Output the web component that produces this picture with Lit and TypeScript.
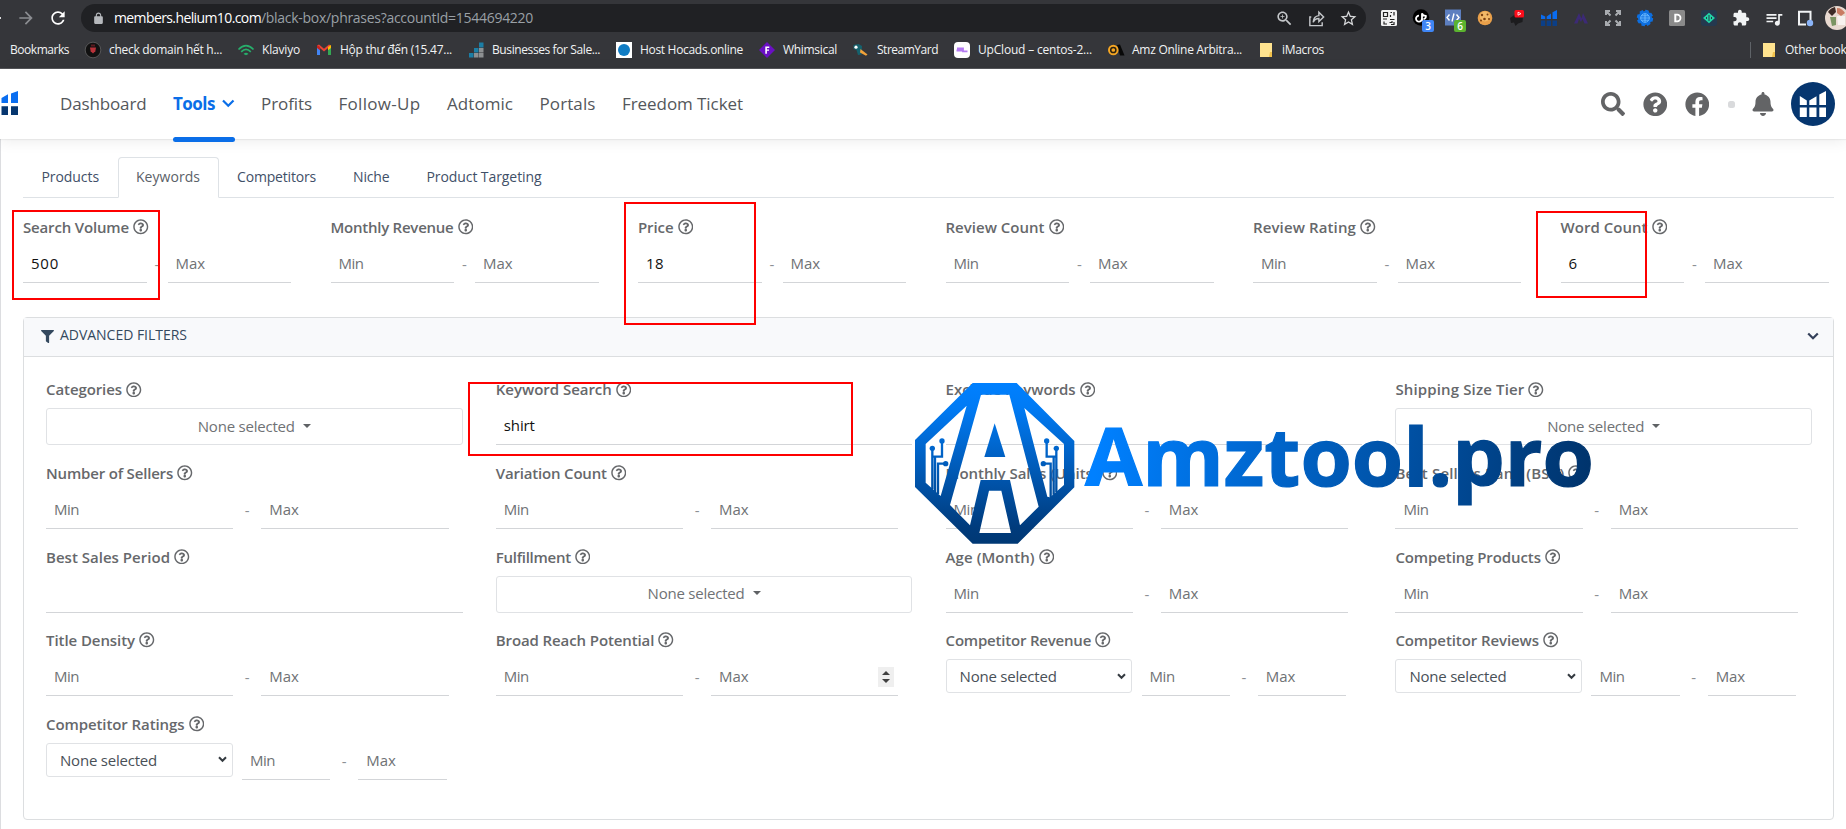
import { LitElement, html, css, svg, nothing } from "lit";
import { customElement, property } from "lit/decorators.js";

const P = {
  search:
    "M505 442.7L405.3 343c-4.5-4.5-10.6-7-17-7H372c27.6-35.3 44-79.7 44-128C416 93.1 322.9 0 208 0S0 93.1 0 208s93.1 208 208 208c48.3 0 92.7-16.4 128-44v16.3c0 6.4 2.5 12.5 7 17l99.7 99.7c9.4 9.4 24.6 9.4 33.9 0l28.3-28.3c9.4-9.4 9.4-24.6.1-34zM208 336c-70.7 0-128-57.2-128-128 0-70.7 57.2-128 128-128 70.7 0 128 57.2 128 128 0 70.7-57.2 128-128 128z",
  help: "M504 256c0 136.997-111.043 248-248 248S8 392.997 8 256C8 119.083 119.043 8 256 8s248 111.083 248 248zM262.655 90c-54.497 0-89.255 22.957-116.549 63.758-3.536 5.286-2.353 12.415 2.715 16.258l34.699 26.31c5.205 3.947 12.621 3.008 16.665-2.122 17.864-22.658 30.113-35.797 57.303-35.797 20.429 0 45.698 13.148 45.698 32.958 0 14.976-12.363 22.667-32.534 33.976C247.128 238.528 216 254.941 216 296v4c0 6.627 5.373 12 12 12h56c6.627 0 12-5.373 12-12v-1.333c0-28.462 83.186-29.647 83.186-106.667 0-58.002-60.165-102-116.531-102zM256 338c-25.365 0-46 20.635-46 46 0 25.364 20.635 46 46 46s46-20.636 46-46c0-25.365-20.635-46-46-46z",
  helpLine:
    "M256 8C119.043 8 8 119.083 8 256c0 136.997 111.043 248 248 248s248-111.003 248-248C504 119.083 392.957 8 256 8zm0 448c-110.532 0-200-89.431-200-200 0-110.495 89.472-200 200-200 110.491 0 200 89.471 200 200 0 110.53-89.431 200-200 200zm107.244-255.2c0 67.052-72.421 68.084-72.421 92.863V300c0 6.627-5.373 12-12 12h-45.647c-6.627 0-12-5.373-12-12v-8.659c0-35.745 27.1-50.034 47.579-61.516 17.561-9.845 28.324-16.541 28.324-29.579 0-17.246-21.999-28.693-39.784-28.693-23.189 0-33.894 10.977-48.942 29.969-4.057 5.12-11.46 6.071-16.666 2.124l-27.824-21.098c-5.107-3.872-6.251-11.066-2.644-16.363C184.846 131.491 214.94 112 261.794 112c49.071 0 101.45 38.304 101.45 88.8zM298 368c0 23.159-18.841 42-42 42s-42-18.841-42-42 18.841-42 42-42 42 18.841 42 42z",
  facebook:
    "M504 256C504 119 393 8 256 8S8 119 8 256c0 123.78 90.69 226.38 209.25 245V327.69h-63V256h63v-54.64c0-62.15 37-96.48 93.67-96.48 27.14 0 55.52 4.84 55.52 4.84v61h-31.28c-30.8 0-40.41 19.12-40.41 38.73V256h68.78l-11 71.69h-57.78V501C413.31 482.38 504 379.78 504 256z",
  bell: "M224 512c35.32 0 63.97-28.65 63.97-64H160.03c0 35.35 28.65 64 63.97 64zm215.39-149.71c-19.32-20.76-55.47-51.99-55.47-154.29 0-77.7-54.48-139.9-127.94-155.16V32c0-17.67-14.32-32-31.98-32s-31.98 14.33-31.98 32v20.84C118.56 68.1 64.08 130.3 64.08 208c0 102.3-36.15 133.53-55.47 154.29-6 6.45-8.66 14.16-8.61 21.71.11 16.4 12.98 32 32.1 32h383.8c19.12 0 32-15.6 32.1-32 .05-7.55-2.61-15.27-8.61-21.71z",
  filter:
    "M487.976 0H24.028C2.71 0-8.047 25.866 7.058 40.971L192 225.941V432c0 7.831 3.821 15.17 10.237 19.662l80 55.98C298.02 518.69 320 507.493 320 487.98V225.941l184.947-184.97C520.021 25.896 509.338 0 487.976 0z",
  puzzle:
    "M20.5 11H19V7c0-1.1-.9-2-2-2h-4V3.5C13 2.12 11.88 1 10.5 1S8 2.12 8 3.5V5H4c-1.1 0-1.99.9-1.99 2v3.8H3.5c1.49 0 2.7 1.21 2.7 2.7s-1.21 2.7-2.7 2.7H2V20c0 1.1.9 2 2 2h3.8v-1.5c0-1.49 1.21-2.7 2.7-2.7 1.49 0 2.7 1.21 2.7 2.7V22H17c1.1 0 2-.9 2-2v-4h1.5c1.38 0 2.5-1.12 2.5-2.5S21.88 11 20.5 11z",
  queue:
    "M15 6H3v2h12V6zm0 4H3v2h12v-2zM3 16h8v-2H3v2zM17 6v8.18c-.31-.11-.65-.18-1-.18-1.66 0-3 1.34-3 3s1.34 3 3 3 3-1.34 3-3V8h3V6h-5z",
  lock: "M18 8h-1V6c0-2.76-2.24-5-5-5S7 3.24 7 6v2H6c-1.1 0-2 .9-2 2v10c0 1.1.9 2 2 2h12c1.1 0 2-.9 2-2V10c0-1.1-.9-2-2-2zM9 6c0-1.66 1.34-3 3-3s3 1.34 3 3v2H9V6z",
  refresh:
    "M17.65 6.35C16.2 4.9 14.21 4 12 4c-4.42 0-7.99 3.58-7.99 8s3.57 8 7.99 8c3.73 0 6.84-2.55 7.73-6h-2.08c-.82 2.33-3.04 4-5.65 4-3.31 0-6-2.69-6-6s2.69-6 6-6c1.66 0 3.14.69 4.22 1.78L13 11h7V4l-2.35 2.35z",
  star: "M22 9.24l-7.19-.62L12 2 9.19 8.63 2 9.24l5.46 4.73L5.82 21 12 17.27 18.18 21l-1.63-7.03L22 9.24zM12 15.4l-3.76 2.27 1-4.28-3.32-2.88 4.38-.38L12 6.1l1.71 4.04 4.38.38-3.32 2.88 1 4.28L12 15.4z",
  zoom: "M15.5 14h-.79l-.28-.27C15.41 12.59 16 11.11 16 9.5 16 5.91 13.09 3 9.5 3S3 5.91 3 9.5 5.91 16 9.5 16c1.61 0 3.09-.59 4.23-1.57l.27.28v.79l5 4.99L20.49 19l-4.99-5zm-6 0C7.01 14 5 11.99 5 9.5S7.01 5 9.5 5 14 7.01 14 9.5 11.99 14 9.5 14zm2.5-4h-2v2H9v-2H7V9h2V7h1v2h2v1z",
  forward: "M12 4l-1.41 1.41L16.17 11H4v2h12.17l-5.58 5.59L12 20l8-8z",
};

const mat = (d: string, size: number, fill: string) =>
  html`<svg width=${size} height=${size} viewBox="0 0 24 24" fill=${fill}><path d=${d} /></svg>`;
const fa = (d: string, w: number, h: number, vw = 512) =>
  html`<svg width=${w} height=${h} viewBox="0 0 ${vw} 512" fill="currentColor"><path d=${d} /></svg>`;

/** A run of text tracked to an exact width. */
@customElement("fit-text")
class FitText extends LitElement {
  @property() text = "";
  @property({ type: Number }) w = 0;
  static styles = css`
    :host {
      display: inline-block;
      flex: none;
      white-space: pre;
      font-variant-ligatures: none;
    }
  `;
  render() {
    return html`<span>${this.text}</span>`;
  }
  firstUpdated() {
    const span = this.renderRoot.querySelector("span") as HTMLElement;
    const natural = span.getBoundingClientRect().width;
    if (this.w && natural) {
      span.style.letterSpacing = (this.w - natural) / this.text.length + "px";
      this.style.width = this.w + "px";
    }
  }
}
const t = (text: string, w: number) => html`<fit-text .text=${text} .w=${w}></fit-text>`;

type Kind = "range" | "button" | "text" | "select" | "spin";
interface Field {
  label: string;
  w: number;
  kind: Kind;
  value?: string;
  vw?: number;
}

@customElement("filter-field")
class FilterField extends LitElement {
  @property({ attribute: false }) field!: Field;
  static styles = css`
    :host {
      display: flex;
      flex-direction: column;
      gap: 8px;
      font-size: 15px;
      color: #6f7275;
    }
    .label {
      box-sizing: border-box;
      display: flex;
      align-items: center;
      gap: 4px;
      height: 20px;
      padding-bottom: 2px;
      line-height: 18px;
      font-weight: 600;
      color: #66686b;
    }
    .row {
      display: flex;
      align-items: flex-start;
      width: 100%;
    }
    .line {
      box-sizing: border-box;
      height: 37px;
      line-height: 35px;
      padding-left: 8px;
      border-bottom: 1px solid #d3d5d8;
      flex: 1;
      display: flex;
      justify-content: space-between;
    }
    .filled {
      color: #111;
    }
    .dash {
      width: var(--dash, 28px);
      text-align: center;
      line-height: 36px;
      color: #8d9094;
    }
    .btn {
      box-sizing: border-box;
      display: flex;
      align-items: center;
      justify-content: center;
      gap: 8px;
      height: 37px;
      padding-bottom: 2px;
      border: 1px solid #e0e2e5;
      border-radius: 3px;
      width: 416.5px;
    }
    .caret {
      border: 4.5px solid transparent;
      border-top-color: #5f6265;
      border-bottom: 0;
    }
    .sel {
      box-sizing: border-box;
      display: flex;
      align-items: center;
      justify-content: space-between;
      width: 186.5px;
      height: 34px;
      padding: 0 5px 0 13px;
      border: 1px solid #e0e2e5;
      border-radius: 3px;
      margin-right: 9.5px;
      color: #495057;
    }
    .range {
      width: var(--range, 402.5px);
    }
    .text {
      width: 416.5px;
    }
    .mini {
      width: 204.5px;
    }
    .spin {
      align-self: center;
      margin-right: 4px;
    }
  `;
  pair(f: Field) {
    const spin = html`<svg class="spin" width="16" height="20" viewBox="0 0 16 20">
      <rect width="16" height="20" fill="#efefef" />
      <path d="M8 4l4 4H4zM8 16l4-4H4z" fill="#404040" />
    </svg>`;
    return html`<div class="line ${f.value ? "filled" : ""}">
        ${f.value ? t(f.value, f.vw ?? 0) : t("Min", 25)}
      </div>
      <div class="dash">-</div>
      <div class="line">${t("Max", 29.5)}${f.kind === "spin" ? spin : nothing}</div>`;
  }
  control(f: Field) {
    switch (f.kind) {
      case "button":
        return html`<div class="btn">${t("None selected", 97)}<i class="caret"></i></div>`;
      case "text":
        return html`<div class="row text">
          <div class="line filled">${f.value ? t(f.value, f.vw ?? 0) : nothing}</div>
        </div>`;
      case "select":
        return html`<div class="row">
          <div class="sel">
            ${t("None selected", 97)}<svg width="9" height="7" viewBox="0 0 9 7">
              <path d="M1 1.2l3.5 3.6L8 1.2" fill="none" stroke="#343a40" stroke-width="2" />
            </svg>
          </div>
          <div class="row mini">${this.pair(f)}</div>
        </div>`;
      default:
        return html`<div class="row range">${this.pair(f)}</div>`;
    }
  }
  render() {
    const f = this.field;
    return html`<div class="label">${t(f.label, f.w)}${fa(P.helpLine, 15.5, 15.5)}</div>
      ${this.control(f)}`;
  }
}

const topFields: Field[] = [
  { label: "Search Volume", w: 106, kind: "range", value: "500", vw: 28 },
  { label: "Monthly Revenue", w: 123, kind: "range" },
  { label: "Price", w: 35.5, kind: "range", value: "18", vw: 18 },
  { label: "Review Count", w: 99, kind: "range" },
  { label: "Review Rating", w: 103, kind: "range" },
  { label: "Word Count", w: 87, kind: "range", value: "6", vw: 9 },
];
const advanced: Field[] = [
  { label: "Categories", w: 76, kind: "button" },
  { label: "Keyword Search", w: 116, kind: "text", value: "shirt", vw: 31 },
  { label: "Exclude Keywords", w: 130, kind: "text" },
  { label: "Shipping Size Tier", w: 129, kind: "button" },
  { label: "Number of Sellers", w: 127, kind: "range" },
  { label: "Variation Count", w: 111, kind: "range" },
  { label: "Monthly Sales (Units)", w: 152, kind: "range" },
  { label: "Best Sellers Rank (BSR)", w: 169, kind: "range" },
  { label: "Best Sales Period", w: 124, kind: "text" },
  { label: "Fulfillment", w: 75, kind: "button" },
  { label: "Age (Month)", w: 89, kind: "range" },
  { label: "Competing Products", w: 145.5, kind: "range" },
  { label: "Title Density", w: 89, kind: "range" },
  { label: "Broad Reach Potential", w: 158.5, kind: "spin" },
  { label: "Competitor Revenue", w: 145.5, kind: "select" },
  { label: "Competitor Reviews", w: 143.5, kind: "select" },
  { label: "Competitor Ratings", w: 138.5, kind: "select" },
];

const ico = (body: unknown) =>
  html`<svg width="18" height="18" viewBox="0 0 18 18">${body}</svg>`;

const bars = (a: string, b: string) => svg`
  <path d="M1 5.5l4.2 2V10H1zM6.7 7.5l4.3-3V10H6.7zM12.5 3.2L17 1v9h-4.5z" fill=${a} />
  <path d="M1 11.5h4.2V17H1zM6.7 11.5H11V17H6.7zM12.5 11.5H17V17h-4.5z" fill=${b} />`;

const bookmarks: { text: string; w: number; icon: unknown }[] = [
  {
    text: "check domain hết h...", w: 113,
    icon: svg`<circle cx="9" cy="9" r="7.8" fill="#111" stroke="#777" stroke-width=".6"/><path d="M6 6.500h6l-.7 3.700L9 12.500l-2.300-2.300z" fill="#b8323a"/><path d="M7 3.500h4v2H7z" fill="#5b1b20"/>`,
  },
  {
    text: "Klaviyo", w: 38,
    icon: svg`<g fill="none" stroke="#27ae6b" stroke-width="1.7"><path d="M1.500 8.500Q9 1 16.500 8.500"/><path d="M4.200 10.800Q9 6 13.800 10.800"/></g><path d="M6.500 13Q9 10.500 11.500 13L9 14.200z" fill="#27ae6b"/>`,
  },
  {
    text: "Hộp thư đến (15.47...", w: 112,
    icon: svg`<path d="M2 4.500v9.500h3V8z" fill="#4285f4"/><path d="M16 4.500v9.500h-3V8z" fill="#34a853"/><path d="M2 4.500L4 3.500l5 4.200 5-4.200 2 1-7 6z" fill="#ea4335"/><path d="M2 4v3l3 2.300V6z" fill="#c5221f"/><path d="M16 4v3l-3 2.300V6z" fill="#fbbc04"/>`,
  },
  {
    text: "Businesses for Sale...", w: 108,
    icon: svg`<g fill="#1b7ea6"><path d="M12 1.500h4.500v5H12zM7 7h4.500v4.500H7zM2 12h4.500v4.500H2z"/></g><g fill="#8d9092"><path d="M12 7h4.500v4.500H12zM7 12h4.500v4.500H7zM12 12h4.500v4.500H12z"/></g>`,
  },
  {
    text: "Host Hocads.online", w: 103,
    icon: svg`<path d="M1 1h16v16H1z" fill="#fff"/><circle cx="9" cy="9" r="6" fill="#0f7cc4"/>`,
  },
  {
    text: "Whimsical", w: 54,
    icon: svg`<path d="M9 1l8 8-8 8-8-8z" fill="#6a0fc4"/><path d="M7.300 5.500h4v1.400H8.900v1.500H11v1.300H8.900v3H7.300z" fill="#fff"/>`,
  },
  {
    text: "StreamYard", w: 61,
    icon: svg`<path d="M1.500 4l5-1 3.500 2-.5 8.500L6 14l-1.500-5-3-1z" fill="#15616d"/><circle cx="4" cy="6.200" r="1.600" fill="#fff"/><path d="M8.500 8l7 5.500-1.500 1.200-6-3.200z" fill="#f2a33a"/>`,
  },
  {
    text: "UpCloud – centos-2...", w: 114,
    icon: svg`<rect x="1" y="1" width="16" height="16" rx="4" fill="#fff"/><path d="M4 7.500h6v2.800h4.500M3.500 9.500h6.500" fill="none" stroke="#b57bf2" stroke-width="1.800"/>`,
  },
  {
    text: "Amz Online Arbitra...", w: 110,
    icon: svg`<path d="M10 4l3-.5 4.500 11H13z" fill="#080808"/><circle cx="6.300" cy="9" r="5.300" fill="#f5a623"/><circle cx="6.300" cy="9" r="2.600" fill="none" stroke="#2a2110" stroke-width="1.500"/>`,
  },
  {
    text: "iMacros", w: 42,
    icon: svg`<path d="M3 2h12v14H3z" fill="#ffe38f"/><path d="M13 11h2v5h-3z" fill="#f2c14b"/>`,
  },
];

const extensions: unknown[] = [
  svg`<rect x="1" y="1" width="16" height="16" rx="1.500" fill="#f2f2f2"/><g fill="none" stroke="#222" stroke-width="1.200"><path d="M3.500 3.500h4v4h-4zM10.500 3.500h1.500M14 3v3.500M10.500 6v2M3 10h4M10 10.500h4.500M4 12.500v2.500h3M9.500 13.500h2.500v-1.500M14 13v2.500h-3"/></g>`,
  svg`<circle cx="9" cy="8.500" r="8.300" fill="#000"/><g fill="none" stroke="#fff" stroke-width="1.800"><path d="M10 12V4.200M10 4.200c.4 1.700 1.800 2.600 3.800 2.600a2.500 2.500 0 0 1-2.300 3.200"/><path d="M10 9.500a3 3 0 1 1-3-2.800"/></g>`,
  svg`<path d="M1 .5h16v16H1z" fill="#5d7fc0"/><path d="M5.500 5.500L3 8.500l2.500 3M12.500 5.500l2.500 3-2.500 3M10 4.500l-2 8" fill="none" stroke="#fff" stroke-width="1.400"/>`,
  svg`<circle cx="9" cy="9" r="7.300" fill="#e9a04a"/><circle cx="9" cy="7.500" r="5" fill="#f3b968"/><g fill="#7b4012"><circle cx="6" cy="6" r="1.200"/><circle cx="11.500" cy="5.500" r="1"/><circle cx="8.500" cy="10" r="1.300"/><circle cx="13" cy="10" r="1"/><circle cx="5" cy="11.500" r="1"/></g>`,
  svg`<path d="M2 9l5-3.500 8 1.500-.5 6-4.500 1.500L7.500 17 6 13.500 3 14z" fill="#1c1c1e"/><rect x="6.500" y="1" width="9.500" height="7.500" rx="1.500" fill="#fb0d1b"/><path d="M10 3.200l3 1.500-3 1.500z" fill="none" stroke="#fff" stroke-width=".8"/>`,
  bars("#0a6cf0", "#0b3f87"),
  svg`<path d="M2 14.500L7 4l2.500 5.500L11 4l5 10.500h-3.500L10.500 10 9 13 7 10l-1.500 4.500z" fill="#3c2a75"/>`,
  svg`<g fill="none" stroke="#a9acb0" stroke-width="2"><path d="M6.500 6.500L2 2M2 6V2h4M11.500 6.500L16 2M12 2h4v4M6.500 11.500L2 16M2 12v4h4M11.500 11.500L16 16M12 16h4v-4"/></g>`,
  svg`<circle cx="9" cy="9" r="7" fill="#0d6fe0" /><circle cx="9" cy="9" r="7.200" fill="none" stroke="#0d6fe0" stroke-width="2" stroke-dasharray="3.600 2.050"/><g stroke="#6fbcff" stroke-width=".9" fill="none"><circle cx="9" cy="9" r="4.300"/><path d="M4.700 9h8.600M9 4.700v8.600M5.500 6.800h7M5.500 11.200h7"/></g>`,
  svg`<rect x="1" y="1" width="16" height="16" rx="1.500" fill="#8a8a8a"/><path d="M6.300 4.800h2.900a4.200 4.200 0 0 1 0 8.400H6.300zM8.300 6.500v5h.9a2.500 2.500 0 0 0 0-5z" fill="#fff" fill-rule="evenodd"/>`,
  svg`<rect x="1" y="1" width="16" height="16" rx="3" fill="#24394f"/><path d="M9 3.700l6 5.300-6 5.300L3 9z" fill="#22d3a5"/><path d="M9 6v6M6.500 8v2M11.500 8v2" stroke="#24394f" stroke-width="1"/>`,
];

@customElement("app-root")
class AppRoot extends LitElement {
  static styles = css`
    :host {
      display: block;
      position: relative;
      width: 1846px;
      height: 829px;
      overflow: hidden;
      background: #fff;
      font-family: "Open Sans", "Noto Sans", sans-serif;
    }
    svg {
      display: block;
      flex: none;
    }
    .chrome {
      box-sizing: border-box;
      height: 69px;
      background: #35363a;
      border-bottom: 1px solid #55565a;
      color: #f1f3f4;
    }
    .toolbar {
      display: flex;
      align-items: center;
      height: 28px;
      padding-top: 4px;
    }
    .tail {
      width: 1px;
      height: 2px;
      background: #ddd;
      margin-right: 15px;
    }
    .reload {
      margin: 0 13px 0 12px;
    }
    .url {
      display: flex;
      align-items: center;
      box-sizing: border-box;
      width: 1287px;
      height: 28px;
      padding: 0 8px 0 11px;
      border-radius: 14px;
      background: #202124;
      font-size: 14px;
      line-height: 28px;
      color: #fff;
    }
    .host {
      margin-left: 9px;
    }
    .path {
      color: #9aa0a6;
      flex: 1;
    }
    .acts {
      display: flex;
      gap: 13px;
    }
    .exts {
      display: flex;
      gap: 14px;
      margin-left: 14px;
    }
    .ext {
      position: relative;
      width: 18px;
      height: 18px;
    }
    .badge {
      position: absolute;
      left: 10px;
      top: 11px;
      width: 12px;
      height: 12px;
      border-radius: 2px;
      background: #3f86f5;
      color: #fff;
      font: 600 10px/12px "Open Sans", sans-serif;
      text-align: center;
    }
    .green {
      background: #5bb32f;
    }
    .face {
      width: 24px;
      height: 24px;
      margin: -3px;
    }
    .marks {
      display: flex;
      align-items: center;
      height: 36px;
      padding-left: 10px;
      font-size: 12px;
      line-height: 36px;
    }
    .mark {
      display: flex;
      align-items: center;
      gap: 7px;
      margin-left: 15px;
    }
    .sep {
      width: 1px;
      height: 16px;
      background: #5f6368;
      margin-left: auto;
    }
    .other {
      margin-left: 9px;
    }
    .otext {
      width: 61px;
      overflow: hidden;
      white-space: nowrap;
    }
    .nav {
      position: relative;
      display: flex;
      align-items: center;
      height: 70px;
      background: #fff;
      box-shadow: 0 1px 1px rgba(0, 0, 0, 0.05), 0 2px 14px rgba(0, 0, 0, 0.08);
      font-size: 17px;
      color: #54575b;
    }
    .menu {
      display: flex;
      gap: 26.5px;
      margin-left: 42px;
      height: 100%;
    }
    .item {
      box-sizing: border-box;
      display: flex;
      align-items: center;
      gap: 7px;
      height: 100%;
      padding-bottom: 2px;
    }
    .on {
      position: relative;
      color: #0a6ee8;
      font-weight: 700;
    }
    .on::after {
      content: "";
      position: absolute;
      left: 0;
      right: 0;
      bottom: -3px;
      height: 5px;
      border-radius: 3px;
      background: #0a6ee8;
    }
    .tools {
      display: flex;
      align-items: center;
      margin-left: auto;
      padding-right: 11px;
      color: #636466;
    }
    .g {
      margin-left: 17.5px;
    }
    .dot {
      width: 7px;
      height: 7px;
      border-radius: 2.5px;
      background: #d9dadc;
      margin: 0 17px 0 19px;
    }
    .avatar {
      display: grid;
      place-items: center;
      width: 44px;
      height: 44px;
      border-radius: 50%;
      background: #06366f;
      margin-left: 17px;
    }
    .page {
      box-sizing: border-box;
      height: 690px;
      padding: 18px 12px 0 22px;
      border-left: 1px solid #dcdde0;
    }
    .tabs {
      display: flex;
      height: 41px;
      box-sizing: border-box;
      border-bottom: 1px solid #dee2e6;
      font-size: 14px;
      color: #3f5068;
      line-height: 38px;
    }
    .tab {
      padding: 1px 18.5px;
      box-sizing: border-box;
      height: 41px;
    }
    .tab.active {
      border: 1px solid #dee2e6;
      border-bottom-color: #fff;
      border-radius: 4px 4px 0 0;
      background: #fff;
      color: #5b6168;
      padding: 0 17.5px;
    }
    .filters {
      display: grid;
      grid-template-columns: repeat(6, 307.5px);
      height: 119px;
      padding-top: 20px;
      box-sizing: border-box;
      --range: 268px;
      --dash: 21px;
    }
    .card {
      box-sizing: border-box;
      height: 502.5px;
      border: 1px solid #dcdee0;
      border-radius: 4px;
    }
    .head {
      box-sizing: border-box;
      display: flex;
      align-items: center;
      height: 39px;
      padding: 0 14px 4px 17px;
      background: #f8f9fb;
      border-bottom: 1px solid #dcdee0;
      color: #34495e;
      font-size: 14px;
      gap: 6px;
      line-height: 34px;
    }
    .head svg {
      margin-top: 2px;
    }
    .head .end {
      margin-left: auto;
    }
    .grid {
      display: grid;
      grid-template-columns: repeat(4, 449.8px);
      grid-auto-rows: 83.6px;
      padding: 23.4px 0 0 22px;
    }
    .box {
      position: absolute;
      box-sizing: border-box;
      border: 2px solid #fe0000;
    }
    .b1 { left: 12px; top: 210px; width: 148px; height: 90px; }
    .b2 { left: 624px; top: 202px; width: 132px; height: 123px; }
    .b3 { left: 1536px; top: 211px; width: 111px; height: 87px; }
    .b4 { left: 468px; top: 382px; width: 385px; height: 74px; }
    .logo {
      position: absolute;
      left: 890px;
      top: 370px;
    }
    .word {
      font: 700 80px "Open Sans", sans-serif;
      stroke-width: 1.2px;
    }
  `;

  chrome() {
    return html`<div class="chrome">
      <div class="toolbar">
        <i class="tail"></i>${mat(P.forward, 20, "#8b8d91")}
        <span class="reload">${mat(P.refresh, 20, "#fff")}</span>
        <div class="url">
          ${mat(P.lock, 13, "#b5b8bc")}
          <span class="host">${t("members.helium10.com", 147)}</span>
          <span class="path">${t("/black-box/phrases?accountId=1544694220", 272)}</span>
          <div class="acts">
            ${mat(P.zoom, 19, "#c4c7ca")}
            <svg width="19" height="19" viewBox="0 0 20 20" fill="none" stroke="#c4c7ca" stroke-width="1.5">
              <path d="M4.500 8.500h-1.500v9h13v-3.500M6.500 14c.3-4.500 2.500-6.700 6-7V3.500l5 5-5 4.700V10c-2.800 0-4.800 1.200-6 4z" />
            </svg>
            ${mat(P.star, 19, "#d4d6d8")}
          </div>
        </div>
        <div class="exts">
          ${extensions.map(
            (e, i) => html`<div class="ext">
              ${ico(e)}${i === 1 ? html`<b class="badge">3</b>` : nothing}${i === 2
                ? html`<b class="badge green">6</b>`
                : nothing}
            </div>`
          )}
          <div class="ext">${mat(P.puzzle, 18, "#f1f3f4")}</div>
          <div class="ext">${mat(P.queue, 20, "#f1f3f4")}</div>
          <div class="ext">
            ${ico(svg`<path d="M3 2.800h11.500v12.700H3z" fill="none" stroke="#f1f3f4" stroke-width="2"/><path d="M10 11h7v6h-7z" fill="#35363a"/><circle cx="14" cy="14" r="3.200" fill="#8ab4f8"/>`)}
          </div>
          <div class="ext">
            <svg class="face" viewBox="0 0 24 24">
              <circle cx="12" cy="12" r="12" fill="#e8d9d0" />
              <path d="M3 6a11 11 0 0 1 7-5l1 5-4 4z" fill="#3d2b26" />
              <path d="M12 2c4 0 6 2 8 5l-4 3-4-3z" fill="#c97b62" />
              <path d="M5 11h6v8l-4 1z" fill="#7a9462" />
              <path d="M12 10h8v9h-7z" fill="#f7f2ef" />
            </svg>
          </div>
        </div>
      </div>
      <div class="marks">
        ${t("Bookmarks", 59)}
        ${bookmarks.map((b) => html`<div class="mark">${ico(b.icon)}${t(b.text, b.w)}</div>`)}
        <i class="sep"></i>
        <div class="mark other">
          ${ico(bookmarks[9].icon)}
          <div class="otext">${t("Other bookmarks", 95)}</div>
        </div>
      </div>
    </div>`;
  }

  nav() {
    const rest: [string, number][] = [
      ["Profits", 51],
      ["Follow-Up", 82],
      ["Adtomic", 66],
      ["Portals", 56],
      ["Freedom Ticket", 121],
    ];
    return html`<div class="nav">
      <svg width="18" height="26" viewBox="0 0 18 26">
        <path d="M1.500 7L8 3.200V12H1.500zM11 2.500L18 0v12h-7z" fill="#0a6ef0" />
        <path d="M1.500 15.300H8V24H1.500zM11 15.300h7V24h-7z" fill="#06366f" />
      </svg>
      <div class="menu">
        <div class="item">${t("Dashboard", 86.5)}</div>
        <div class="item on">
          ${t("Tools", 42)}<svg width="12.500" height="9" viewBox="0 0 12.500 9">
            <path d="M1 1.500l5.250 5.200L11.500 1.500" fill="none" stroke="#0a6ee8" stroke-width="2.200" />
          </svg>
        </div>
        ${rest.map(([s, w]) => html`<div class="item">${t(s, w)}</div>`)}
      </div>
      <div class="tools">
        ${fa(P.search, 24, 24)}<span class="g">${fa(P.help, 24.500, 24.500)}</span>
        <span class="g">${fa(P.facebook, 24.500, 24.500)}</span>
        <i class="dot"></i>${fa(P.bell, 22, 24, 448)}
        <div class="avatar">
          <svg width="28" height="28" viewBox="0 0 28 28" fill="#fff">
            <path d="M.8 6l7 4.500V15h-7zM10.300 10.500L17.500 6.300V15h-7.200zM20.300 4.500L27 1v14h-6.700z" />
            <path d="M.8 17.500h7V27h-7zM10.300 17.500h7.200V27h-7.200zM20.300 17.500H27V27h-6.700z" />
          </svg>
        </div>
      </div>
    </div>`;
  }

  logo() {
    return html`<svg class="logo" width="710" height="180" viewBox="0 0 710 180">
      <defs>
        <linearGradient id="v" gradientUnits="userSpaceOnUse" x1="0" y1="39" x2="0" y2="521">
          <stop offset="0" stop-color="#0080ff" />
          <stop offset=".15" stop-color="#007bf5" />
          <stop offset=".9" stop-color="#003b7c" />
          <stop offset="1" stop-color="#003874" />
        </linearGradient>
        <linearGradient id="h" gradientUnits="userSpaceOnUse" x1="210" y1="60" x2="700" y2="130">
          <stop offset="0" stop-color="#0080ff" />
          <stop offset="1" stop-color="#00336b" />
        </linearGradient>
      </defs>
      <g transform="scale(.33333)">
        <path
          fill="url(#v)"
          fill-rule="evenodd"
          d="M248 39H380L553 213V352L383 521H248L75 351V210ZM230 107L107 222V338L152 378ZM403 114L522 222V345L480 382L472 380ZM273 74L180 405L240 466L272 330H360L390 466L446 410L358 74ZM297 362H334L363 489H268Z"
        />
        <path fill="url(#v)" d="M314 160L346 261H283Z" />
        <g fill="none" stroke="url(#v)" stroke-width="7">
          <path d="M156 213V260H127M127 235V358M167 281H144V372M470 213V260H500M499 235V366M460 281H482V381M135 260V366M491 260V374" />
        </g>
        <g fill="url(#v)">
          <circle cx="156" cy="213" r="8" /><circle cx="127" cy="235" r="8" /><circle cx="167" cy="281" r="8" />
          <circle cx="470" cy="213" r="8" /><circle cx="499" cy="235" r="8" /><circle cx="460" cy="281" r="8" />
        </g>
      </g>
      <text class="word" x="195" y="115.500" textLength="509" lengthAdjust="spacingAndGlyphs" fill="url(#h)" stroke="url(#h)">Amztool.pro</text>
    </svg>`;
  }

  render() {
    return html`${this.chrome()}${this.nav()}
      <div class="page">
        <div class="tabs">
          <div class="tab">${t("Products", 57.500)}</div>
          <div class="tab active">${t("Keywords", 64)}</div>
          <div class="tab">${t("Competitors", 79)}</div>
          <div class="tab">${t("Niche", 36.500)}</div>
          <div class="tab">${t("Product Targeting", 115)}</div>
        </div>
        <div class="filters">
          ${topFields.map((f) => html`<filter-field .field=${f}></filter-field>`)}
        </div>
        <div class="card">
          <div class="head">
            ${fa(P.filter, 13, 13)}${t("ADVANCED FILTERS", 127)}
            <svg class="end" width="12" height="8" viewBox="0 0 12 8">
              <path d="M1.200 1.500L6 6.200l4.800-4.700" fill="none" stroke="#34405a" stroke-width="2.200" />
            </svg>
          </div>
          <div class="grid">
            ${advanced.map((f) => html`<filter-field .field=${f}></filter-field>`)}
          </div>
        </div>
      </div>
      <div class="box b1"></div>
      <div class="box b2"></div>
      <div class="box b3"></div>
      <div class="box b4"></div>
      ${this.logo()}`;
  }
}
